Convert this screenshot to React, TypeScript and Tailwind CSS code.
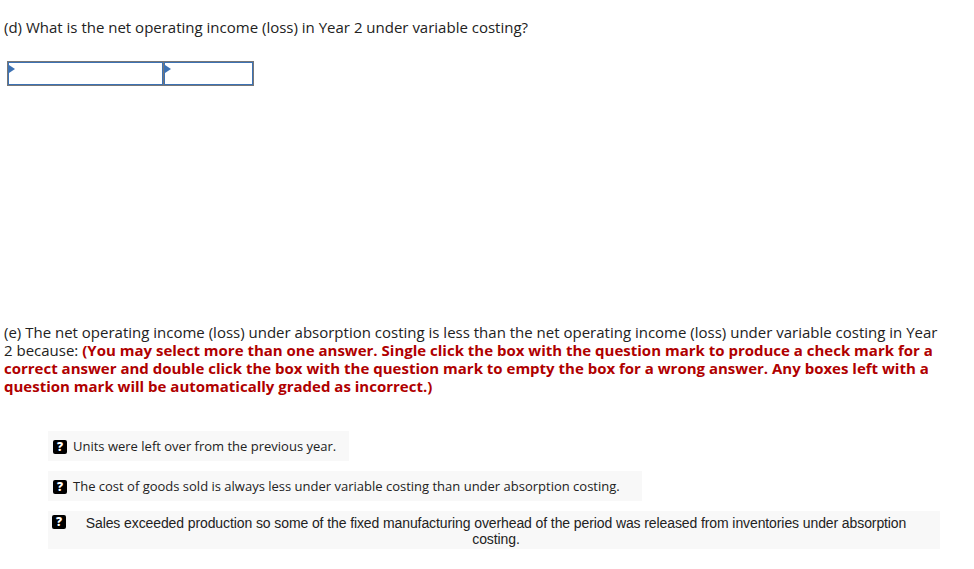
import React from "react";

const QIcon = () => (
  <span className="inline-flex h-[14px] w-[14px] shrink-0 items-center justify-center rounded-[2px] bg-black text-[12px] font-extrabold leading-none text-white">
    ?
  </span>
);

const Cell = ({ w }: { w: string }) => (
  <div className={`relative h-[23px] border border-[#3d72b4] bg-white ${w}`}>
    <span className="absolute left-0 top-[2px] h-0 w-0 border-y-[4px] border-l-[6px] border-y-transparent border-l-[#3d72b4]" />
  </div>
);

export default function App() {
  return (
    <div className="min-h-[569px] w-[974px] bg-white text-[#222]" style={{ fontFamily: "'Open Sans', Lato, sans-serif" }}>
      <div className="px-[4px] pt-[17px] text-[15px] leading-[20px]">
        (d) What is the net operating income (loss) in Year 2 under variable costing?
      </div>

      <div className="ml-[7px] mt-[24px] flex w-[247px] border border-[#777] bg-white">
        <Cell w="w-[155px]" />
        <div className="w-px bg-[#777]" />
        <Cell w="flex-1" />
      </div>

      <p className="mt-[237px] w-[948px] px-[4px] text-[15px] leading-[18px]">
        (e) The net operating income (loss) under absorption costing is less than the net operating income (loss) under variable costing in Year 2 because:{" "}
        <span className="font-bold text-[#b00000]">
          (You may select more than one answer. Single click the box with the question mark to produce a check mark for a correct answer and double click the box with the question mark to empty the box for a wrong answer. Any boxes left with a question mark will be automatically graded as incorrect.)
        </span>
      </p>

      <div className="ml-[48px] mt-[36px] flex flex-col items-start gap-[10px] text-[13px]">
        <div className="flex h-[30px] w-[301px] items-center gap-[6px] bg-[#f8f8f8] pl-[5px] pt-[2px]">
          <QIcon />
          <span>Units were left over from the previous year.</span>
        </div>
        <div className="flex h-[30px] w-[594px] items-center gap-[6px] bg-[#f8f8f8] pl-[5px] pt-[2px]">
          <QIcon />
          <span>The cost of goods sold is always less under variable costing than under absorption costing.</span>
        </div>
        <div className="flex w-[892px] items-start bg-[#f8f8f8] pb-[2px] pl-[4px] pr-[22px] pt-[4px]">
          <QIcon />
          <span
            className="flex-1 pl-[8px] text-center text-[14px] leading-[16px] tracking-[-0.1px]"
            style={{ fontFamily: "'Liberation Sans', Arial, sans-serif" }}
          >
            Sales exceeded production so some of the fixed manufacturing overhead of the period was released from inventories under absorption costing.
          </span>
        </div>
      </div>
    </div>
  );
}
